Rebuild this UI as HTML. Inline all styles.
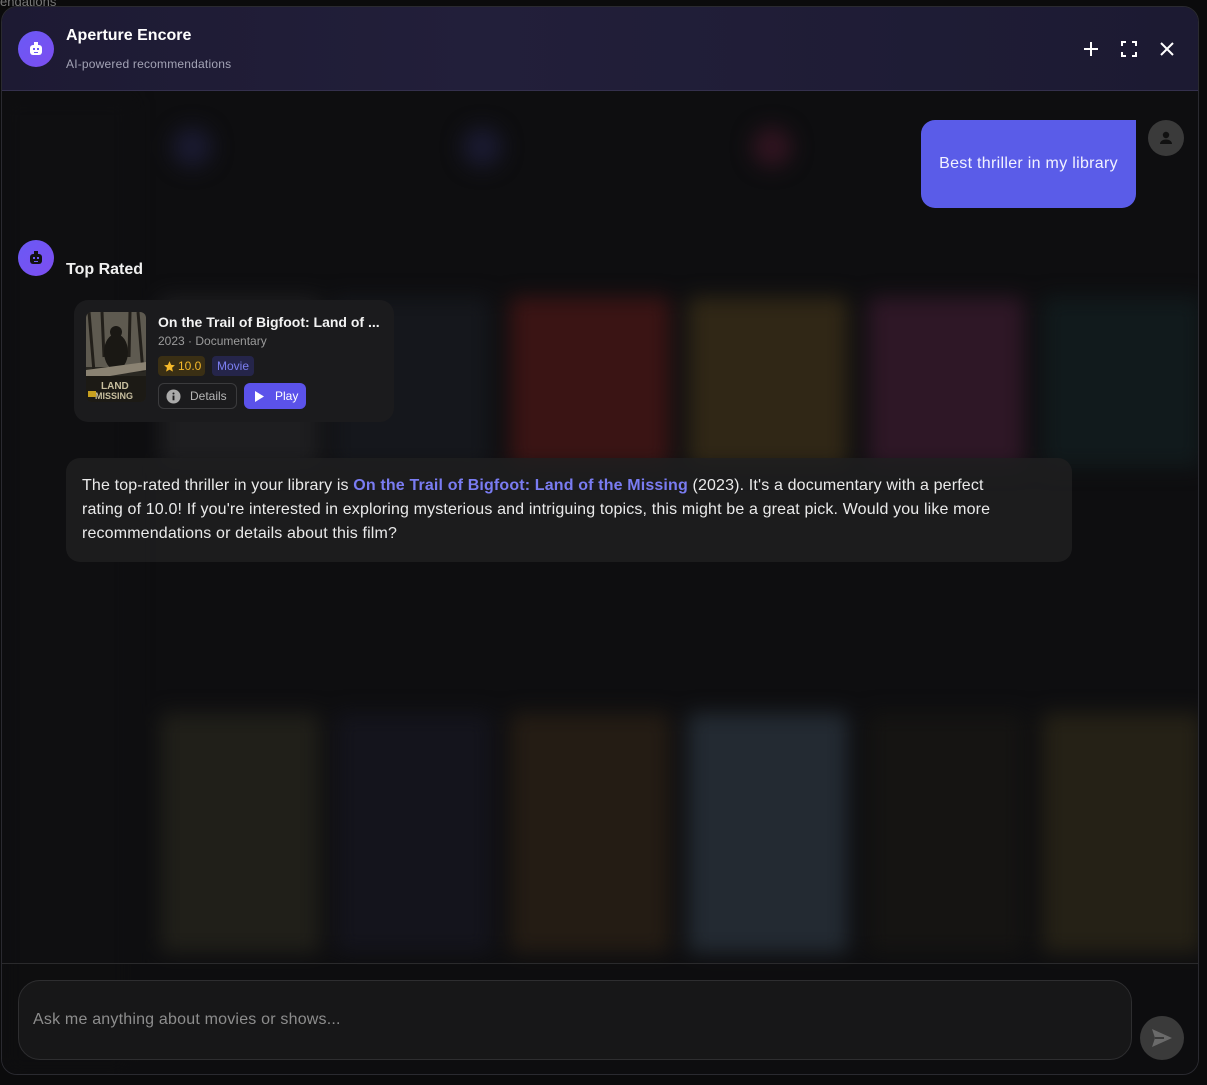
<!DOCTYPE html>
<html><head><meta charset="utf-8"><style>
*{box-sizing:border-box;margin:0;padding:0}
body{width:1207px;height:1085px;background:#0b0b0c;font-family:"Liberation Sans",sans-serif;position:relative;overflow:hidden;color:#fff}
.bgtext{position:absolute;left:0;top:-6px;font-size:13px;color:#777}
.modal{position:absolute;left:1px;top:6px;width:1198px;height:1069px;border:1px solid #2a2a30;border-radius:16px;overflow:hidden;background:#0e0e10}
.blur{position:absolute;inset:0;filter:blur(10px)}
.blur div{position:absolute;border-radius:6px}
.hdr{position:absolute;left:0;top:0;width:100%;height:84px;background:linear-gradient(90deg,#1d1a33,#221f3a 40%,#1c1a32);border-bottom:1px solid #34304d}
.av{position:absolute;width:36px;height:36px;border-radius:50%;background:linear-gradient(135deg,#6a5af5,#7c4df0);display:flex;align-items:center;justify-content:center}
.t1{position:absolute;left:64px;top:20px;font-size:16px;font-weight:bold}
.t2{position:absolute;left:64px;top:50px;font-size:12px;color:#a3a3b5;letter-spacing:.2px}
.ub{position:absolute;left:919px;top:113px;width:215px;height:88px;background:#5a5ce8;border-radius:14px 0 14px 14px;font-size:16px;display:flex;align-items:center;justify-content:center;color:#f2f2ff;letter-spacing:.3px}
.uav{position:absolute;left:1146px;top:113px;width:36px;height:36px;border-radius:50%;background:#3a3a3a;display:flex;align-items:center;justify-content:center}
.tr{position:absolute;left:64px;top:254px;font-size:16px;font-weight:bold;color:#f0f0f0}
.card{position:absolute;left:72px;top:293px;width:320px;height:122px;background:#1b1b1d;border-radius:14px}
.poster{position:absolute;left:12px;top:12px;width:60px;height:90px;border-radius:6px;overflow:hidden}
.ct{position:absolute;left:84px;top:14px;font-size:14px;font-weight:bold;color:#f3f3f3}
.cs{position:absolute;left:84px;top:34px;font-size:12px;color:#9b9b9b}
.rt{position:absolute;left:84px;top:56px;height:20px;width:47px;background:#3a2f14;border-radius:4px;font-size:12px;color:#f5b92a;display:flex;align-items:center;padding-left:5px;gap:2px}
.mv{position:absolute;left:138px;top:56px;height:20px;width:42px;background:#25254a;border-radius:4px;font-size:12px;color:#7c7ff0;display:flex;align-items:center;justify-content:center}
.det{position:absolute;left:84px;top:83px;width:79px;height:26px;border:1px solid #3b3b3d;border-radius:6px;font-size:12px;color:#b5b5b5;display:flex;align-items:center;padding-left:7px;gap:9px}
.play{position:absolute;left:170px;top:83px;width:62px;height:26px;background:#5b52ea;border-radius:6px;font-size:12px;color:#fff;display:flex;align-items:center;padding-left:10px;gap:11px}
.msg{position:absolute;left:64px;top:451px;width:1006px;height:104px;background:rgba(30,30,32,.85);border-radius:14px;padding:16px 16px;font-size:16px;line-height:24px;color:#eaeaea;letter-spacing:.15px;white-space:nowrap}
.msg b{color:#7a7cf2}
.foot{position:absolute;left:0;top:956px;width:100%;height:113px;border-top:1px solid #2a2a2c;background:rgba(14,14,15,.6)}
.inp{position:absolute;left:16px;top:16px;width:1114px;height:80px;border:1px solid #2e2e30;border-radius:22px;background:#171718;font-size:16px;color:#8d8d8d;padding:30px 14px;letter-spacing:.2px}
.send{position:absolute;left:1138px;top:52px;width:44px;height:44px;border-radius:50%;background:#3a3a3a;display:flex;align-items:center;justify-content:center}
</style></head><body>
<div class="bgtext">endations</div>
<div class="modal">
 <div class="blur">
  <div style="left:0;top:90px;width:130px;height:980px;background:#0f0f11"></div>
  <div style="left:170px;top:120px;width:40px;height:40px;background:#1a1a30;border-radius:50%"></div>
  <div style="left:460px;top:120px;width:40px;height:40px;background:#1a1a30;border-radius:50%"></div>
  <div style="left:750px;top:120px;width:40px;height:40px;background:#301420;border-radius:50%"></div>
  <div style="left:158px;top:290px;width:160px;height:170px;background:#1e1e20"></div>
  <div style="left:330px;top:290px;width:158px;height:170px;background:#15171c"></div>
  <div style="left:508px;top:290px;width:160px;height:170px;background:#3a1414"></div>
  <div style="left:686px;top:290px;width:160px;height:170px;background:#302716"></div>
  <div style="left:866px;top:290px;width:156px;height:170px;background:#2e1726"></div>
  <div style="left:1040px;top:290px;width:160px;height:170px;background:#111a1c"></div>
  <div style="left:158px;top:706px;width:160px;height:240px;background:#201f19"></div>
  <div style="left:334px;top:706px;width:156px;height:240px;background:#14141c"></div>
  <div style="left:508px;top:706px;width:160px;height:240px;background:#241c14"></div>
  <div style="left:686px;top:706px;width:160px;height:240px;background:#232a32"></div>
  <div style="left:866px;top:706px;width:156px;height:240px;background:#151412"></div>
  <div style="left:1040px;top:706px;width:160px;height:240px;background:#252116"></div>
 </div>
 <div class="hdr">
  <div class="av" style="left:16px;top:24px"><svg width="18" height="18" viewBox="0 0 18 18"><rect x="3" y="5" width="12" height="10" rx="3" fill="#fff"/><rect x="7" y="2" width="4" height="3" fill="#fff"/><rect x="6" y="8" width="2" height="2" fill="#6a5af5"/><rect x="10" y="8" width="2" height="2" fill="#6a5af5"/><rect x="7" y="12" width="4" height="1" fill="#6a5af5"/></svg></div>
  <div class="t1">Aperture Encore</div>
  <div class="t2">AI-powered recommendations</div>
  <svg style="position:absolute;left:1080px;top:33px" width="18" height="18" viewBox="0 0 18 18"><path d="M9 2v14M2 9h14" stroke="#fff" stroke-width="2"/></svg>
  <svg style="position:absolute;left:1118px;top:33px" width="18" height="18" viewBox="0 0 18 18"><path d="M2 6V2h4M12 2h4v4M16 12v4h-4M6 16H2v-4" stroke="#fff" stroke-width="2" fill="none"/></svg>
  <svg style="position:absolute;left:1156px;top:33px" width="18" height="18" viewBox="0 0 18 18"><path d="M3 3l12 12M15 3L3 15" stroke="#fff" stroke-width="2"/></svg>
 </div>
 <div class="ub">Best thriller in my library</div>
 <div class="uav"><svg width="18" height="18" viewBox="0 0 18 18"><circle cx="9" cy="6" r="3.2" fill="#111"/><path d="M3 15c0-3 3-4.5 6-4.5s6 1.5 6 4.5z" fill="#111"/></svg></div>
 <div class="av" style="left:16px;top:233px"><svg width="18" height="18" viewBox="0 0 18 18"><rect x="3" y="5" width="12" height="10" rx="3" fill="#111"/><rect x="7" y="2" width="4" height="3" fill="#111"/><rect x="6" y="8" width="2" height="2" fill="#6a5af5"/><rect x="10" y="8" width="2" height="2" fill="#6a5af5"/><rect x="7" y="12" width="4" height="1" fill="#6a5af5"/></svg></div>
 <div class="tr">Top Rated</div>
 <div class="card">
  <div class="poster"><svg width="60" height="90" viewBox="0 0 60 90"><rect width="60" height="90" fill="#2a2822"/><rect width="60" height="55" fill="#5e5a50"/><path d="M3 0l5 60M52 0l5 60M16 0l2 45M44 0l-1 45" stroke="#221f1a" stroke-width="3"/><ellipse cx="30" cy="40" rx="12" ry="18" fill="#1a1814"/><circle cx="30" cy="20" r="6" fill="#1a1814"/><path d="M0 58l60-8v8l-60 10z" fill="#8a8272"/><rect y="64" width="60" height="26" fill="#1c1a15"/><text x="15" y="77" font-size="10" fill="#c8bf9f" font-family="Liberation Sans" font-weight="bold">LAND</text><text x="9" y="87" font-size="9" fill="#c8bf9f" font-family="Liberation Sans" font-weight="bold">MISSING</text><rect x="2" y="79" width="8" height="6" fill="#c8a020"/></svg></div>
  <div class="ct">On the Trail of Bigfoot: Land of ...</div>
  <div class="cs">2023 · Documentary</div>
  <div class="rt"><svg width="13" height="13" viewBox="0 0 24 24"><path d="M12 2l3 7 7 .6-5.3 4.7 1.6 7.2L12 17.8 5.7 21.5l1.6-7.2L2 9.6 9 9z" fill="#f5b92a"/></svg>10.0</div>
  <div class="mv">Movie</div>
  <div class="det"><svg width="15" height="15" viewBox="0 0 16 16"><circle cx="8" cy="8" r="7.5" fill="#aaa"/><rect x="7" y="7" width="2" height="5" fill="#1b1b1d"/><circle cx="8" cy="4.8" r="1.1" fill="#1b1b1d"/></svg>Details</div>
  <div class="play"><svg width="10" height="11" viewBox="0 0 10 11"><path d="M1 0l9 5.5L1 11z" fill="#fff"/></svg>Play</div>
 </div>
 <div class="msg">The top-rated thriller in your library is <b>On the Trail of Bigfoot: Land of the Missing</b> (2023). It's a documentary with a perfect<br>rating of 10.0! If you're interested in exploring mysterious and intriguing topics, this might be a great pick. Would you like more<br>recommendations or details about this film?</div>
 <div class="foot">
  <div class="inp">Ask me anything about movies or shows...</div>
  <div class="send"><svg width="22" height="20" viewBox="0 0 22 20"><path d="M1 1l20 9-20 9 3-9z" fill="#6a6a6a"/><path d="M4 10h9" stroke="#3a3a3a" stroke-width="2"/></svg></div>
 </div>
</div>
</body></html>
